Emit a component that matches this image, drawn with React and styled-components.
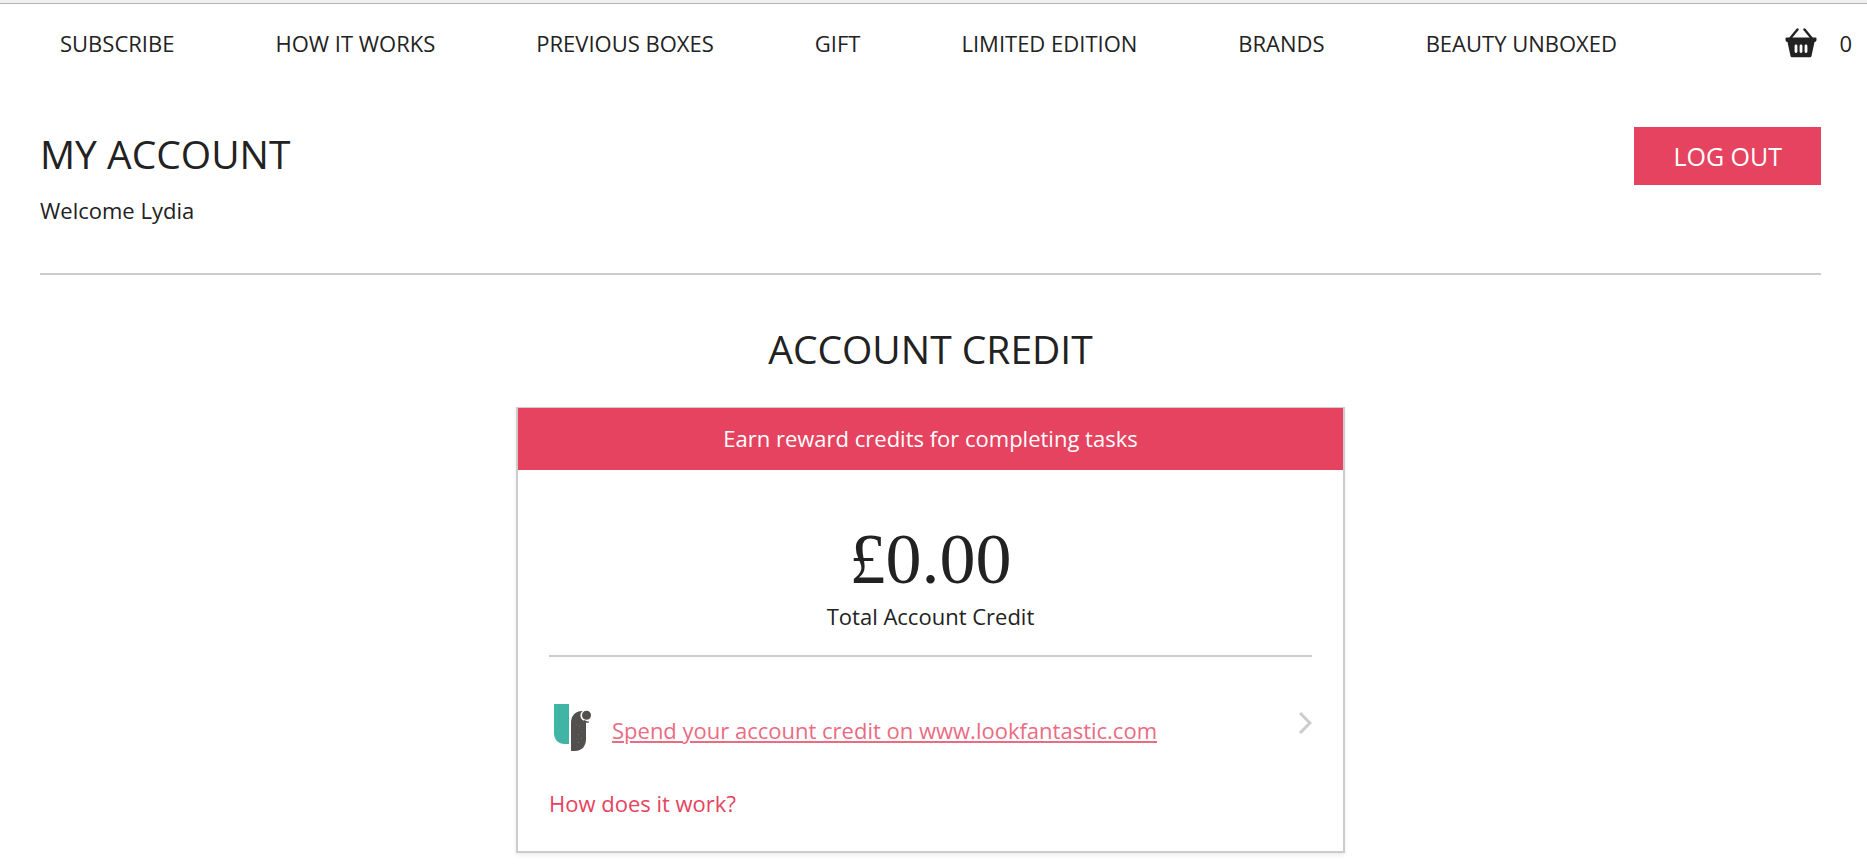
import React from "react";
import styled, { createGlobalStyle } from "styled-components";

const GlobalStyle = createGlobalStyle`
  * {
    box-sizing: border-box;
  }

  body {
    margin: 0;
    background-color: #fff;
    color: #222;
    font-family: "Open Sans", "Noto Sans", sans-serif;
    font-size: 22px;
    line-height: 32px;
  }

  h1, h2, p {
    margin: 0;
    font-weight: 400;
  }
`;

const TopStrip = styled.div`
  height: 4px;
  background-color: #f1f1f1;
  border-bottom: 1px solid #b4b4b4;
`;

const NavBar = styled.header`
  display: flex;
  align-items: center;
  justify-content: space-between;
  min-height: 78px;
  padding: 0 15px 0 60px;
`;

const NavList = styled.nav`
  display: flex;
  gap: 101px;
`;

const NavLink = styled.a`
  color: #222;
  text-decoration: none;
  text-transform: uppercase;
  white-space: nowrap;
`;

const BasketLink = styled.a`
  display: flex;
  align-items: center;
  gap: 22px;
  color: #222;
  text-decoration: none;
`;

const Page = styled.main`
  padding: 45px 46px 15px 40px;
`;

const AccountHeader = styled.div`
  display: flex;
  align-items: flex-start;
  justify-content: space-between;
  padding-bottom: 47px;
  border-bottom: 2px solid #ccc;
`;

const Title = styled.h1`
  font-size: 39px;
  line-height: 54px;
`;

const Welcome = styled.p`
  margin-top: 13px;
`;

const LogoutButton = styled.button`
  padding: 13px 39px;
  border: none;
  background-color: #e64360;
  color: #fff;
  font-family: inherit;
  font-size: 25px;
  line-height: 32px;
  cursor: pointer;
`;

const CreditSection = styled.section`
  display: flex;
  flex-direction: column;
  align-items: center;
  padding-top: 47px;
`;

const SectionTitle = styled.h2`
  margin-bottom: 31px;
  font-size: 39px;
  line-height: 54px;
`;

const Card = styled.div`
  width: 100%;
  max-width: 829px;
  border: 2px solid #ccc;
  border-top-width: 1px;
  box-shadow: 0 2px 4px rgba(0, 0, 0, 0.08);
`;

const Banner = styled.p`
  padding: 14px 15px 16px;
  background-color: #e64360;
  color: #fff;
  text-align: center;
`;

const CardBody = styled.div`
  padding: 48px 31px 32px;
`;

const Balance = styled.div`
  padding-bottom: 23px;
  border-bottom: 2px solid #ccc;
  text-align: center;
`;

const Amount = styled.p`
  font-family: "Liberation Serif", serif;
  font-size: 72px;
  line-height: 82px;
`;

const SpendRow = styled.div`
  display: flex;
  align-items: center;
  padding: 47px 0 35px;
`;

const SpendLink = styled.a`
  margin-left: 16px;
  padding-top: 4px;
  color: #eb6b83;
  text-decoration: underline;
  text-decoration-thickness: 2px;
  text-underline-offset: 2px;
`;

const Chevron = styled.svg`
  align-self: flex-start;
  margin-left: auto;
`;

const HelpLink = styled.a`
  color: #e64360;
  text-decoration: none;
`;

const navItems = [
  "Subscribe",
  "How it works",
  "Previous boxes",
  "Gift",
  "Limited edition",
  "Brands",
  "Beauty unboxed",
];

function BasketIcon() {
  return (
    <svg width="32" height="30" viewBox="0 0 32 30" aria-hidden="true">
      <path d="M12.5 1.5 5.5 10M19.5 1.5 26.5 10" stroke="#222" strokeWidth="2.4" strokeLinecap="round" />
      <path
        d="M1.5 9.5h29a1 1 0 0 1 1 1V12a2 2 0 0 1-2 2l-3 14a1.5 1.5 0 0 1-1.5 1.2H7A1.5 1.5 0 0 1 5.5 28l-3-14a2 2 0 0 1-2-2v-1.5a1 1 0 0 1 1-1z"
        fill="#222"
      />
      <path d="M11 18v5.5M16 18v5.5M21 18v5.5" stroke="#fff" strokeWidth="2.8" strokeLinecap="round" />
    </svg>
  );
}

function LookfantasticLogo() {
  return (
    <svg width="47" height="48" viewBox="0 0 47 48" aria-hidden="true">
      <path d="M5 0h15v40h-4C9 40 5 35.5 5 29z" fill="#40b5a6" />
      <path d="M22 47V19C22 11 27 7 33 7h5v11h-1v17c0 7-4 12-11 12z" fill="#52504e" />
      <circle cx="37" cy="11.5" r="5.6" fill="#fff" />
      <path d="M35 16.500q2 2.200 5 1.500" fill="none" stroke="#52504e" strokeWidth="1.2" />
      <circle cx="37.5" cy="11.3" r="4.5" fill="#52504e" />
      <g fill="#3f6f95">
        <circle cx="27.5" cy="20.5" r=".6" />
        <circle cx="32.5" cy="27.5" r=".6" />
        <circle cx="27.5" cy="34.5" r=".6" />
        <circle cx="27.5" cy="43" r=".6" />
      </g>
      <g fill="#b46a43">
        <circle cx="30.5" cy="22.5" r=".6" />
        <circle cx="29.5" cy="30.5" r=".6" />
        <circle cx="32.5" cy="34" r=".6" />
        <circle cx="29.5" cy="38.5" r=".6" />
      </g>
    </svg>
  );
}

function App() {
  return (
    <>
      <GlobalStyle />
      <TopStrip />
      <NavBar>
        <NavList>
          {navItems.map((item) => (
            <NavLink key={item} href="#">{item}</NavLink>
          ))}
        </NavList>
        <BasketLink href="#" aria-label="Basket, 0 items">
          <BasketIcon />
          <span>0</span>
        </BasketLink>
      </NavBar>

      <Page>
        <AccountHeader>
          <div>
            <Title>MY ACCOUNT</Title>
            <Welcome>Welcome Lydia</Welcome>
          </div>
          <LogoutButton type="button">LOG OUT</LogoutButton>
        </AccountHeader>

        <CreditSection>
          <SectionTitle>ACCOUNT CREDIT</SectionTitle>
          <Card>
            <Banner>Earn reward credits for completing tasks</Banner>
            <CardBody>
              <Balance>
                <Amount>£0.00</Amount>
                <p>Total Account Credit</p>
              </Balance>
              <SpendRow>
                <LookfantasticLogo />
                <SpendLink href="#">Spend your account credit on www.lookfantastic.com</SpendLink>
                <Chevron width="14" height="38" viewBox="0 0 14 38" aria-hidden="true">
                  <path d="M2 9l10 10L2 29" fill="none" stroke="#ccc" strokeWidth="3" />
                </Chevron>
              </SpendRow>
              <HelpLink href="#">How does it work?</HelpLink>
            </CardBody>
          </Card>
        </CreditSection>
      </Page>
    </>
  );
}

export default App;
